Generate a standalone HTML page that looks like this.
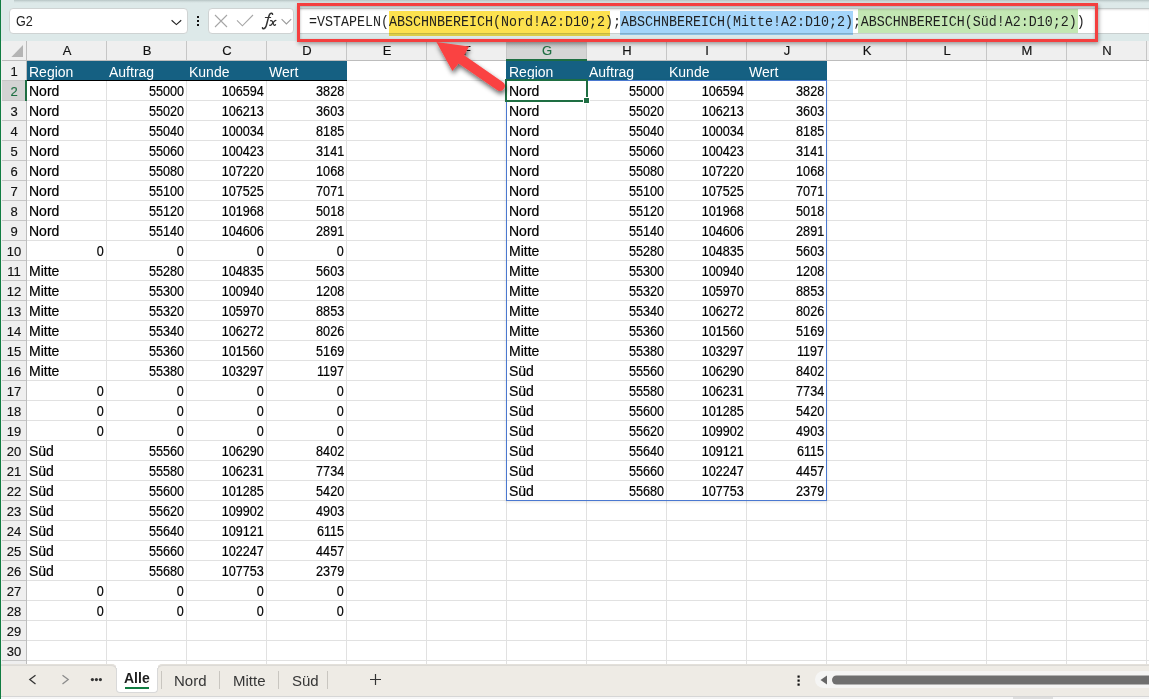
<!DOCTYPE html>
<html><head><meta charset="utf-8">
<style>
*{box-sizing:border-box;margin:0;padding:0}
html,body{width:1149px;height:699px;overflow:hidden;background:#fff;font-family:"Liberation Sans",sans-serif;color:#1f1f1f}
#root{position:absolute;left:0;top:0;width:1149px;height:699px;overflow:hidden}
.abs{position:absolute}
svg{position:absolute;overflow:visible}
/* formula bar */
#fbar{position:absolute;left:0;top:0;width:1149px;height:41px;background:#dde9e9}
#fbartop{position:absolute;left:14px;top:0;width:1135px;height:3px;background:linear-gradient(#b6c4c4,#d3dfdf 60%,#dde9e9)}
#namebox{position:absolute;left:9px;top:8px;width:179px;height:26px;background:#fff;border:1px solid #cfd3d3;border-radius:4px}
#namebox span{position:absolute;left:6px;top:4px;font-size:14px;transform:scaleX(.9);transform-origin:0 0;color:#1f1f1f}
#fxbox{position:absolute;left:208px;top:8px;width:86px;height:26px;background:#fff;border:1px solid #cfd3d3;border-radius:4px}
#fwhite{position:absolute;left:300px;top:8px;width:849px;height:26px;background:#fff;border-top:1px solid #c4caca;border-bottom:1px solid #c9cfcf;box-shadow:inset 0 2px 2px -1px rgba(0,0,0,.12)}
.hlt{position:absolute;mix-blend-mode:multiply}
#ftext{position:absolute;left:309px;top:12px;font-family:"Liberation Mono",monospace;font-size:13.34px;transform:scaleY(1.1);transform-origin:0 0;line-height:20px;color:#1f1f1f;white-space:pre}
#redrect{position:absolute;left:297px;top:3px;width:801px;height:39px;border:3px solid #f43f3f;box-shadow:1px 2px 4px rgba(0,0,0,.35),inset 0 1px 3px rgba(0,0,0,.28)}
/* headers */
#colhdr{position:absolute;left:1px;top:41px;width:1148px;height:20px;background:#efefef}
#colhdrb{position:absolute;left:2px;top:60px;width:1147px;height:1px;background:#bdbdbd}
#rowhdr{position:absolute;left:1px;top:41px;width:26px;height:625px;background:#efefef}
#rowhdrb{position:absolute;left:26px;top:41px;width:1px;height:625px;background:#bdbdbd}
.ch{position:absolute;top:41px;width:79px;height:19px;text-align:center;font-size:13px;line-height:20px;padding-left:1px;color:#111;-webkit-text-stroke:0.15px currentColor}
.ch.sel{background:linear-gradient(#c2c2c2,#d5d5d5 45%,#d5d5d5);color:#1e6e42}
.chl{position:absolute;top:41px;width:1px;height:19px;background:#c6c6c6}
.rh{position:absolute;left:2px;width:24px;height:19px;text-align:center;font-size:13px;line-height:21px;color:#111;-webkit-text-stroke:0.15px currentColor}
.rh.sel{background:#d3d3d3;color:#1e6e42}
.rhl{position:absolute;left:2px;width:24px;height:1px;background:#c6c6c6}
.vl{position:absolute;top:61px;width:1px;height:605px;background:#e1e1e1}
.hl{position:absolute;left:27px;width:1122px;height:1px;background:#e1e1e1}
.thf{position:absolute;height:19px;background:#156082}
.thb{position:absolute;height:1px;background:#000}
.c{position:absolute;width:79px;height:19px;font-size:14px;line-height:20px;padding:0 2px 0 2px;white-space:nowrap;color:#000;-webkit-text-stroke:0.2px currentColor}
.c.n{text-align:right}
.c.n span{display:inline-block;transform:scaleX(.9);transform-origin:100% 50%}
.c.hd{color:#fff;padding-top:1px;-webkit-text-stroke:0}
/* tab bar */
#tabbar{position:absolute;left:1px;top:664px;width:1148px;height:32px;background:#eeebe5}
#tabbot{position:absolute;left:1px;top:696px;width:1148px;height:3px;background:#f7f7f7;border-top:1px solid #d6d6d6}
.tab{position:absolute;top:665px;height:32px;font-size:15px;line-height:32px;color:#363636}
.sep{position:absolute;top:671px;width:1px;height:18px;background:#c9c6c0}
#greenl{position:absolute;left:0;top:0;width:1px;height:699px;background:#107c41}
</style></head><body><div id="root">
<div id="colhdr"></div>
<div id="rowhdr"></div>
<div class="vl" style="left:106px"></div>
<div class="vl" style="left:186px"></div>
<div class="vl" style="left:266px"></div>
<div class="vl" style="left:346px"></div>
<div class="vl" style="left:426px"></div>
<div class="vl" style="left:506px"></div>
<div class="vl" style="left:586px"></div>
<div class="vl" style="left:666px"></div>
<div class="vl" style="left:746px"></div>
<div class="vl" style="left:826px"></div>
<div class="vl" style="left:906px"></div>
<div class="vl" style="left:986px"></div>
<div class="vl" style="left:1066px"></div>
<div class="vl" style="left:1146px"></div>
<div class="hl" style="top:80px"></div>
<div class="hl" style="top:100px"></div>
<div class="hl" style="top:120px"></div>
<div class="hl" style="top:140px"></div>
<div class="hl" style="top:160px"></div>
<div class="hl" style="top:180px"></div>
<div class="hl" style="top:200px"></div>
<div class="hl" style="top:220px"></div>
<div class="hl" style="top:240px"></div>
<div class="hl" style="top:260px"></div>
<div class="hl" style="top:280px"></div>
<div class="hl" style="top:300px"></div>
<div class="hl" style="top:320px"></div>
<div class="hl" style="top:340px"></div>
<div class="hl" style="top:360px"></div>
<div class="hl" style="top:380px"></div>
<div class="hl" style="top:400px"></div>
<div class="hl" style="top:420px"></div>
<div class="hl" style="top:440px"></div>
<div class="hl" style="top:460px"></div>
<div class="hl" style="top:480px"></div>
<div class="hl" style="top:500px"></div>
<div class="hl" style="top:520px"></div>
<div class="hl" style="top:540px"></div>
<div class="hl" style="top:560px"></div>
<div class="hl" style="top:580px"></div>
<div class="hl" style="top:600px"></div>
<div class="hl" style="top:620px"></div>
<div class="hl" style="top:640px"></div>
<div class="hl" style="top:660px"></div>
<div class="hl" style="top:680px"></div>
<div class="ch" style="left:27px">A</div>
<div class="chl" style="left:106px"></div>
<div class="ch" style="left:107px">B</div>
<div class="chl" style="left:186px"></div>
<div class="ch" style="left:187px">C</div>
<div class="chl" style="left:266px"></div>
<div class="ch" style="left:267px">D</div>
<div class="chl" style="left:346px"></div>
<div class="ch" style="left:347px">E</div>
<div class="chl" style="left:426px"></div>
<div class="ch" style="left:427px">F</div>
<div class="chl" style="left:506px"></div>
<div class="ch sel" style="left:507px">G</div>
<div class="chl" style="left:586px"></div>
<div class="ch" style="left:587px">H</div>
<div class="chl" style="left:666px"></div>
<div class="ch" style="left:667px">I</div>
<div class="chl" style="left:746px"></div>
<div class="ch" style="left:747px">J</div>
<div class="chl" style="left:826px"></div>
<div class="ch" style="left:827px">K</div>
<div class="chl" style="left:906px"></div>
<div class="ch" style="left:907px">L</div>
<div class="chl" style="left:986px"></div>
<div class="ch" style="left:987px">M</div>
<div class="chl" style="left:1066px"></div>
<div class="ch" style="left:1067px">N</div>
<div class="chl" style="left:1146px"></div>
<div class="rh" style="top:61px">1</div>
<div class="rhl" style="top:80px"></div>
<div class="rh sel" style="top:81px">2</div>
<div class="rhl" style="top:100px"></div>
<div class="rh" style="top:101px">3</div>
<div class="rhl" style="top:120px"></div>
<div class="rh" style="top:121px">4</div>
<div class="rhl" style="top:140px"></div>
<div class="rh" style="top:141px">5</div>
<div class="rhl" style="top:160px"></div>
<div class="rh" style="top:161px">6</div>
<div class="rhl" style="top:180px"></div>
<div class="rh" style="top:181px">7</div>
<div class="rhl" style="top:200px"></div>
<div class="rh" style="top:201px">8</div>
<div class="rhl" style="top:220px"></div>
<div class="rh" style="top:221px">9</div>
<div class="rhl" style="top:240px"></div>
<div class="rh" style="top:241px">10</div>
<div class="rhl" style="top:260px"></div>
<div class="rh" style="top:261px">11</div>
<div class="rhl" style="top:280px"></div>
<div class="rh" style="top:281px">12</div>
<div class="rhl" style="top:300px"></div>
<div class="rh" style="top:301px">13</div>
<div class="rhl" style="top:320px"></div>
<div class="rh" style="top:321px">14</div>
<div class="rhl" style="top:340px"></div>
<div class="rh" style="top:341px">15</div>
<div class="rhl" style="top:360px"></div>
<div class="rh" style="top:361px">16</div>
<div class="rhl" style="top:380px"></div>
<div class="rh" style="top:381px">17</div>
<div class="rhl" style="top:400px"></div>
<div class="rh" style="top:401px">18</div>
<div class="rhl" style="top:420px"></div>
<div class="rh" style="top:421px">19</div>
<div class="rhl" style="top:440px"></div>
<div class="rh" style="top:441px">20</div>
<div class="rhl" style="top:460px"></div>
<div class="rh" style="top:461px">21</div>
<div class="rhl" style="top:480px"></div>
<div class="rh" style="top:481px">22</div>
<div class="rhl" style="top:500px"></div>
<div class="rh" style="top:501px">23</div>
<div class="rhl" style="top:520px"></div>
<div class="rh" style="top:521px">24</div>
<div class="rhl" style="top:540px"></div>
<div class="rh" style="top:541px">25</div>
<div class="rhl" style="top:560px"></div>
<div class="rh" style="top:561px">26</div>
<div class="rhl" style="top:580px"></div>
<div class="rh" style="top:581px">27</div>
<div class="rhl" style="top:600px"></div>
<div class="rh" style="top:601px">28</div>
<div class="rhl" style="top:620px"></div>
<div class="rh" style="top:621px">29</div>
<div class="rhl" style="top:640px"></div>
<div class="rh" style="top:641px">30</div>
<div class="rhl" style="top:660px"></div>
<div class="thf" style="left:27px;top:61px;width:320px"></div>
<div class="thb" style="left:27px;top:80px;width:320px"></div>
<div class="c hd" style="left:27px;top:61px">Region</div>
<div class="c hd" style="left:107px;top:61px">Auftrag</div>
<div class="c hd" style="left:187px;top:61px">Kunde</div>
<div class="c hd" style="left:267px;top:61px">Wert</div>
<div class="c" style="left:27px;top:81px">Nord</div>
<div class="c n" style="left:107px;top:81px"><span>55000</span></div>
<div class="c n" style="left:187px;top:81px"><span>106594</span></div>
<div class="c n" style="left:267px;top:81px"><span>3828</span></div>
<div class="c" style="left:27px;top:101px">Nord</div>
<div class="c n" style="left:107px;top:101px"><span>55020</span></div>
<div class="c n" style="left:187px;top:101px"><span>106213</span></div>
<div class="c n" style="left:267px;top:101px"><span>3603</span></div>
<div class="c" style="left:27px;top:121px">Nord</div>
<div class="c n" style="left:107px;top:121px"><span>55040</span></div>
<div class="c n" style="left:187px;top:121px"><span>100034</span></div>
<div class="c n" style="left:267px;top:121px"><span>8185</span></div>
<div class="c" style="left:27px;top:141px">Nord</div>
<div class="c n" style="left:107px;top:141px"><span>55060</span></div>
<div class="c n" style="left:187px;top:141px"><span>100423</span></div>
<div class="c n" style="left:267px;top:141px"><span>3141</span></div>
<div class="c" style="left:27px;top:161px">Nord</div>
<div class="c n" style="left:107px;top:161px"><span>55080</span></div>
<div class="c n" style="left:187px;top:161px"><span>107220</span></div>
<div class="c n" style="left:267px;top:161px"><span>1068</span></div>
<div class="c" style="left:27px;top:181px">Nord</div>
<div class="c n" style="left:107px;top:181px"><span>55100</span></div>
<div class="c n" style="left:187px;top:181px"><span>107525</span></div>
<div class="c n" style="left:267px;top:181px"><span>7071</span></div>
<div class="c" style="left:27px;top:201px">Nord</div>
<div class="c n" style="left:107px;top:201px"><span>55120</span></div>
<div class="c n" style="left:187px;top:201px"><span>101968</span></div>
<div class="c n" style="left:267px;top:201px"><span>5018</span></div>
<div class="c" style="left:27px;top:221px">Nord</div>
<div class="c n" style="left:107px;top:221px"><span>55140</span></div>
<div class="c n" style="left:187px;top:221px"><span>104606</span></div>
<div class="c n" style="left:267px;top:221px"><span>2891</span></div>
<div class="c n" style="left:27px;top:241px"><span>0</span></div>
<div class="c n" style="left:107px;top:241px"><span>0</span></div>
<div class="c n" style="left:187px;top:241px"><span>0</span></div>
<div class="c n" style="left:267px;top:241px"><span>0</span></div>
<div class="c" style="left:27px;top:261px">Mitte</div>
<div class="c n" style="left:107px;top:261px"><span>55280</span></div>
<div class="c n" style="left:187px;top:261px"><span>104835</span></div>
<div class="c n" style="left:267px;top:261px"><span>5603</span></div>
<div class="c" style="left:27px;top:281px">Mitte</div>
<div class="c n" style="left:107px;top:281px"><span>55300</span></div>
<div class="c n" style="left:187px;top:281px"><span>100940</span></div>
<div class="c n" style="left:267px;top:281px"><span>1208</span></div>
<div class="c" style="left:27px;top:301px">Mitte</div>
<div class="c n" style="left:107px;top:301px"><span>55320</span></div>
<div class="c n" style="left:187px;top:301px"><span>105970</span></div>
<div class="c n" style="left:267px;top:301px"><span>8853</span></div>
<div class="c" style="left:27px;top:321px">Mitte</div>
<div class="c n" style="left:107px;top:321px"><span>55340</span></div>
<div class="c n" style="left:187px;top:321px"><span>106272</span></div>
<div class="c n" style="left:267px;top:321px"><span>8026</span></div>
<div class="c" style="left:27px;top:341px">Mitte</div>
<div class="c n" style="left:107px;top:341px"><span>55360</span></div>
<div class="c n" style="left:187px;top:341px"><span>101560</span></div>
<div class="c n" style="left:267px;top:341px"><span>5169</span></div>
<div class="c" style="left:27px;top:361px">Mitte</div>
<div class="c n" style="left:107px;top:361px"><span>55380</span></div>
<div class="c n" style="left:187px;top:361px"><span>103297</span></div>
<div class="c n" style="left:267px;top:361px"><span>1197</span></div>
<div class="c n" style="left:27px;top:381px"><span>0</span></div>
<div class="c n" style="left:107px;top:381px"><span>0</span></div>
<div class="c n" style="left:187px;top:381px"><span>0</span></div>
<div class="c n" style="left:267px;top:381px"><span>0</span></div>
<div class="c n" style="left:27px;top:401px"><span>0</span></div>
<div class="c n" style="left:107px;top:401px"><span>0</span></div>
<div class="c n" style="left:187px;top:401px"><span>0</span></div>
<div class="c n" style="left:267px;top:401px"><span>0</span></div>
<div class="c n" style="left:27px;top:421px"><span>0</span></div>
<div class="c n" style="left:107px;top:421px"><span>0</span></div>
<div class="c n" style="left:187px;top:421px"><span>0</span></div>
<div class="c n" style="left:267px;top:421px"><span>0</span></div>
<div class="c" style="left:27px;top:441px">Süd</div>
<div class="c n" style="left:107px;top:441px"><span>55560</span></div>
<div class="c n" style="left:187px;top:441px"><span>106290</span></div>
<div class="c n" style="left:267px;top:441px"><span>8402</span></div>
<div class="c" style="left:27px;top:461px">Süd</div>
<div class="c n" style="left:107px;top:461px"><span>55580</span></div>
<div class="c n" style="left:187px;top:461px"><span>106231</span></div>
<div class="c n" style="left:267px;top:461px"><span>7734</span></div>
<div class="c" style="left:27px;top:481px">Süd</div>
<div class="c n" style="left:107px;top:481px"><span>55600</span></div>
<div class="c n" style="left:187px;top:481px"><span>101285</span></div>
<div class="c n" style="left:267px;top:481px"><span>5420</span></div>
<div class="c" style="left:27px;top:501px">Süd</div>
<div class="c n" style="left:107px;top:501px"><span>55620</span></div>
<div class="c n" style="left:187px;top:501px"><span>109902</span></div>
<div class="c n" style="left:267px;top:501px"><span>4903</span></div>
<div class="c" style="left:27px;top:521px">Süd</div>
<div class="c n" style="left:107px;top:521px"><span>55640</span></div>
<div class="c n" style="left:187px;top:521px"><span>109121</span></div>
<div class="c n" style="left:267px;top:521px"><span>6115</span></div>
<div class="c" style="left:27px;top:541px">Süd</div>
<div class="c n" style="left:107px;top:541px"><span>55660</span></div>
<div class="c n" style="left:187px;top:541px"><span>102247</span></div>
<div class="c n" style="left:267px;top:541px"><span>4457</span></div>
<div class="c" style="left:27px;top:561px">Süd</div>
<div class="c n" style="left:107px;top:561px"><span>55680</span></div>
<div class="c n" style="left:187px;top:561px"><span>107753</span></div>
<div class="c n" style="left:267px;top:561px"><span>2379</span></div>
<div class="c n" style="left:27px;top:581px"><span>0</span></div>
<div class="c n" style="left:107px;top:581px"><span>0</span></div>
<div class="c n" style="left:187px;top:581px"><span>0</span></div>
<div class="c n" style="left:267px;top:581px"><span>0</span></div>
<div class="c n" style="left:27px;top:601px"><span>0</span></div>
<div class="c n" style="left:107px;top:601px"><span>0</span></div>
<div class="c n" style="left:187px;top:601px"><span>0</span></div>
<div class="c n" style="left:267px;top:601px"><span>0</span></div>
<div class="thf" style="left:506px;top:61px;width:321px"></div>
<div class="c hd" style="left:507px;top:61px">Region</div>
<div class="c hd" style="left:587px;top:61px">Auftrag</div>
<div class="c hd" style="left:667px;top:61px">Kunde</div>
<div class="c hd" style="left:747px;top:61px">Wert</div>
<div class="c" style="left:507px;top:81px">Nord</div>
<div class="c n" style="left:587px;top:81px"><span>55000</span></div>
<div class="c n" style="left:667px;top:81px"><span>106594</span></div>
<div class="c n" style="left:747px;top:81px"><span>3828</span></div>
<div class="c" style="left:507px;top:101px">Nord</div>
<div class="c n" style="left:587px;top:101px"><span>55020</span></div>
<div class="c n" style="left:667px;top:101px"><span>106213</span></div>
<div class="c n" style="left:747px;top:101px"><span>3603</span></div>
<div class="c" style="left:507px;top:121px">Nord</div>
<div class="c n" style="left:587px;top:121px"><span>55040</span></div>
<div class="c n" style="left:667px;top:121px"><span>100034</span></div>
<div class="c n" style="left:747px;top:121px"><span>8185</span></div>
<div class="c" style="left:507px;top:141px">Nord</div>
<div class="c n" style="left:587px;top:141px"><span>55060</span></div>
<div class="c n" style="left:667px;top:141px"><span>100423</span></div>
<div class="c n" style="left:747px;top:141px"><span>3141</span></div>
<div class="c" style="left:507px;top:161px">Nord</div>
<div class="c n" style="left:587px;top:161px"><span>55080</span></div>
<div class="c n" style="left:667px;top:161px"><span>107220</span></div>
<div class="c n" style="left:747px;top:161px"><span>1068</span></div>
<div class="c" style="left:507px;top:181px">Nord</div>
<div class="c n" style="left:587px;top:181px"><span>55100</span></div>
<div class="c n" style="left:667px;top:181px"><span>107525</span></div>
<div class="c n" style="left:747px;top:181px"><span>7071</span></div>
<div class="c" style="left:507px;top:201px">Nord</div>
<div class="c n" style="left:587px;top:201px"><span>55120</span></div>
<div class="c n" style="left:667px;top:201px"><span>101968</span></div>
<div class="c n" style="left:747px;top:201px"><span>5018</span></div>
<div class="c" style="left:507px;top:221px">Nord</div>
<div class="c n" style="left:587px;top:221px"><span>55140</span></div>
<div class="c n" style="left:667px;top:221px"><span>104606</span></div>
<div class="c n" style="left:747px;top:221px"><span>2891</span></div>
<div class="c" style="left:507px;top:241px">Mitte</div>
<div class="c n" style="left:587px;top:241px"><span>55280</span></div>
<div class="c n" style="left:667px;top:241px"><span>104835</span></div>
<div class="c n" style="left:747px;top:241px"><span>5603</span></div>
<div class="c" style="left:507px;top:261px">Mitte</div>
<div class="c n" style="left:587px;top:261px"><span>55300</span></div>
<div class="c n" style="left:667px;top:261px"><span>100940</span></div>
<div class="c n" style="left:747px;top:261px"><span>1208</span></div>
<div class="c" style="left:507px;top:281px">Mitte</div>
<div class="c n" style="left:587px;top:281px"><span>55320</span></div>
<div class="c n" style="left:667px;top:281px"><span>105970</span></div>
<div class="c n" style="left:747px;top:281px"><span>8853</span></div>
<div class="c" style="left:507px;top:301px">Mitte</div>
<div class="c n" style="left:587px;top:301px"><span>55340</span></div>
<div class="c n" style="left:667px;top:301px"><span>106272</span></div>
<div class="c n" style="left:747px;top:301px"><span>8026</span></div>
<div class="c" style="left:507px;top:321px">Mitte</div>
<div class="c n" style="left:587px;top:321px"><span>55360</span></div>
<div class="c n" style="left:667px;top:321px"><span>101560</span></div>
<div class="c n" style="left:747px;top:321px"><span>5169</span></div>
<div class="c" style="left:507px;top:341px">Mitte</div>
<div class="c n" style="left:587px;top:341px"><span>55380</span></div>
<div class="c n" style="left:667px;top:341px"><span>103297</span></div>
<div class="c n" style="left:747px;top:341px"><span>1197</span></div>
<div class="c" style="left:507px;top:361px">Süd</div>
<div class="c n" style="left:587px;top:361px"><span>55560</span></div>
<div class="c n" style="left:667px;top:361px"><span>106290</span></div>
<div class="c n" style="left:747px;top:361px"><span>8402</span></div>
<div class="c" style="left:507px;top:381px">Süd</div>
<div class="c n" style="left:587px;top:381px"><span>55580</span></div>
<div class="c n" style="left:667px;top:381px"><span>106231</span></div>
<div class="c n" style="left:747px;top:381px"><span>7734</span></div>
<div class="c" style="left:507px;top:401px">Süd</div>
<div class="c n" style="left:587px;top:401px"><span>55600</span></div>
<div class="c n" style="left:667px;top:401px"><span>101285</span></div>
<div class="c n" style="left:747px;top:401px"><span>5420</span></div>
<div class="c" style="left:507px;top:421px">Süd</div>
<div class="c n" style="left:587px;top:421px"><span>55620</span></div>
<div class="c n" style="left:667px;top:421px"><span>109902</span></div>
<div class="c n" style="left:747px;top:421px"><span>4903</span></div>
<div class="c" style="left:507px;top:441px">Süd</div>
<div class="c n" style="left:587px;top:441px"><span>55640</span></div>
<div class="c n" style="left:667px;top:441px"><span>109121</span></div>
<div class="c n" style="left:747px;top:441px"><span>6115</span></div>
<div class="c" style="left:507px;top:461px">Süd</div>
<div class="c n" style="left:587px;top:461px"><span>55660</span></div>
<div class="c n" style="left:667px;top:461px"><span>102247</span></div>
<div class="c n" style="left:747px;top:461px"><span>4457</span></div>
<div class="c" style="left:507px;top:481px">Süd</div>
<div class="c n" style="left:587px;top:481px"><span>55680</span></div>
<div class="c n" style="left:667px;top:481px"><span>107753</span></div>
<div class="c n" style="left:747px;top:481px"><span>2379</span></div>
<div id="colhdrb"></div>
<div id="rowhdrb"></div>
<svg style="left:0;top:0" width="30" height="62"><path d="M23 45 L23 57 L11.4 57 Z" fill="#b4b4b4"/></svg>
<!-- selection -->
<div class="abs" style="left:506px;top:59px;width:81px;height:2px;background:#1e6e42"></div>
<div class="abs" style="left:25px;top:80px;width:2px;height:21px;background:#1e6e42"></div>
<div class="abs" style="left:506px;top:80px;width:321px;height:421px;border:1px solid #4a78d0;box-shadow:0 1px 3px rgba(0,0,0,.12)"></div>
<div class="abs" style="left:505px;top:79px;width:83px;height:23px;border:2px solid #1e6e42"></div>
<div class="abs" style="left:583px;top:97px;width:7px;height:7px;background:#1e6e42;border:1px solid #fff;"></div>
<!-- formula bar -->
<div id="fbar"><div id="fbartop"></div></div>
<div id="namebox"><span>G2</span></div>
<svg style="left:0;top:0" width="300" height="40">
 <path d="M171.6 20.3 L176.4 24.6 L181.2 20.3" fill="none" stroke="#222" stroke-width="1.15"/>
 <rect x="197" y="16" width="2" height="2" fill="#111"/><rect x="197" y="20" width="2" height="2" fill="#111"/><rect x="197" y="24" width="2" height="2" fill="#111"/>
</svg>
<div id="fxbox"></div>
<svg style="left:0;top:0" width="300" height="40">
 <path d="M215 15 L227 27 M227 15 L215 27" fill="none" stroke="#a6a6a6" stroke-width="1.1"/>
 <path d="M237 20.3 L242.4 25.8 L253 15" fill="none" stroke="#a6a6a6" stroke-width="1.1"/>
 <g fill="none" stroke="#333" stroke-linecap="round">
 <path d="M272.6 14.3 C272.3 13.2 271.1 12.9 270.2 13.6 C269.2 14.4 268.7 16.3 268.2 18.4 L266.4 25.2 C265.7 27.6 264.6 28.9 263.2 28.7 C262.6 28.6 262.4 28.2 262.5 27.8" stroke-width="1.5"/>
 <path d="M265.4 17.5 H270.6" stroke-width="1.2"/>
 <path d="M270.7 20.7 C271.5 20.3 272.1 20.8 272.5 21.8 L273.6 24.5 C274.0 25.4 274.7 25.6 275.5 24.8" stroke-width="1.3"/>
 <path d="M275.9 20.3 C275.3 20.3 274.4 21.0 273.3 22.4 L271.5 24.6 C270.9 25.4 270.3 25.5 269.7 25.2" stroke-width="1.3"/>
</g>
 <path d="M281.6 19.2 L286.4 23.9 L291.2 19.2" fill="none" stroke="#9a9a9a" stroke-width="1.1"/>
</svg>
<div id="fwhite"></div>
<div class="hlt" style="left:389px;top:11px;width:221px;height:25px;background:#fde24f"></div>
<div class="hlt" style="left:620px;top:11px;width:233px;height:24px;background:#a4d5fa"></div>
<div class="hlt" style="left:858px;top:9px;width:220px;height:24px;background:#c3e7b3"></div>
<div id="ftext">=VSTAPELN(ABSCHNBEREICH(Nord!A2:D10;2);ABSCHNBEREICH(Mitte!A2:D10;2);ABSCHNBEREICH(Süd!A2:D10;2))</div>
<div id="redrect"></div>
<!-- arrow -->
<svg style="left:0;top:0" width="1149" height="699">
 <defs><filter id="sh" x="-50%" y="-50%" width="200%" height="200%"><feGaussianBlur in="SourceAlpha" stdDeviation="2.5"/><feOffset dx="1" dy="3" result="b"/><feComponentTransfer><feFuncA type="linear" slope="0.6"/></feComponentTransfer><feMerge><feMergeNode/><feMergeNode in="SourceGraphic"/></feMerge></filter></defs>
 <g filter="url(#sh)">
 <path d="M436.4 42.1 L469.1 46.4 L464.2 55.3 L503.0 82.2 A4.9 4.9 0 0 1 497.4 90.2 L458.6 63.4 L452.4 70.9 Z" fill="#fa4343"/>
 </g>
</svg>
<!-- tab bar -->
<div class="abs" style="left:1px;top:672px;width:1148px;height:24px;background:#eeebe5"></div>
<div class="abs" style="left:1px;top:664px;width:116px;height:12px;background:#eeebe5;border-top:1px solid #e3e0da;border-top-right-radius:5px;box-shadow:inset -1px 1px 0 #dcdad6"></div>
<div class="abs" style="left:157px;top:664px;width:992px;height:12px;background:#eeebe5;border-top:1px solid #e3e0da;border-top-left-radius:5px;box-shadow:inset 1px 1px 0 #dcdad6"></div>
<div class="abs" style="left:116px;top:664px;width:42px;height:29px;background:#fff;border:1px solid #d9d9d9;border-top:none;border-radius:0 0 4px 4px"></div>
<div class="abs" style="left:116px;top:664px;width:42px;height:4px;background:#fff"></div>
<svg style="left:0;top:0" width="1149" height="699">
 <path d="M35.5 675.2 L29.8 679.5 L35.5 683.9" fill="none" stroke="#333" stroke-width="1.3"/>
 <path d="M62.5 675.2 L68.2 679.5 L62.5 683.9" fill="none" stroke="#8c8c8c" stroke-width="1.3"/>
 <circle cx="92.4" cy="679.6" r="1.6" fill="#333"/><circle cx="96.4" cy="679.6" r="1.6" fill="#333"/><circle cx="100.4" cy="679.6" r="1.6" fill="#333"/>
 <path d="M375.5 674 V685 M370 679.5 H381" stroke="#333" stroke-width="1.2"/>
 <rect x="797.5" y="675.5" width="2.2" height="2.2" fill="#111"/><rect x="797.5" y="679.5" width="2.2" height="2.2" fill="#111"/><rect x="797.5" y="683.5" width="2.2" height="2.2" fill="#111"/>
 <rect x="815" y="671" width="340" height="17" rx="8.5" fill="#f5f5f4"/>
 <path d="M827 675.5 V684.5 L820.5 680 Z" fill="#666"/>
 <rect x="832" y="675.5" width="330" height="9" rx="4.5" fill="#6f6f6f"/>
</svg>
<div class="tab" style="left:124px;top:662px;font-weight:bold;font-size:14px;color:#1f1f1f">Alle</div>
<div class="abs" style="left:125px;top:687px;width:24px;height:2px;background:#107c41"></div>
<div class="sep" style="left:161px"></div>
<div class="tab" style="left:174px">Nord</div>
<div class="sep" style="left:219px"></div>
<div class="tab" style="left:233px">Mitte</div>
<div class="sep" style="left:278px"></div>
<div class="tab" style="left:292px">Süd</div>
<div class="sep" style="left:327px"></div>
<div id="tabbot"></div>
<div class="abs" style="left:1013px;top:697px;width:40px;height:2px;background:#dedede"></div>
<div id="greenl"></div>
</div></body></html>
